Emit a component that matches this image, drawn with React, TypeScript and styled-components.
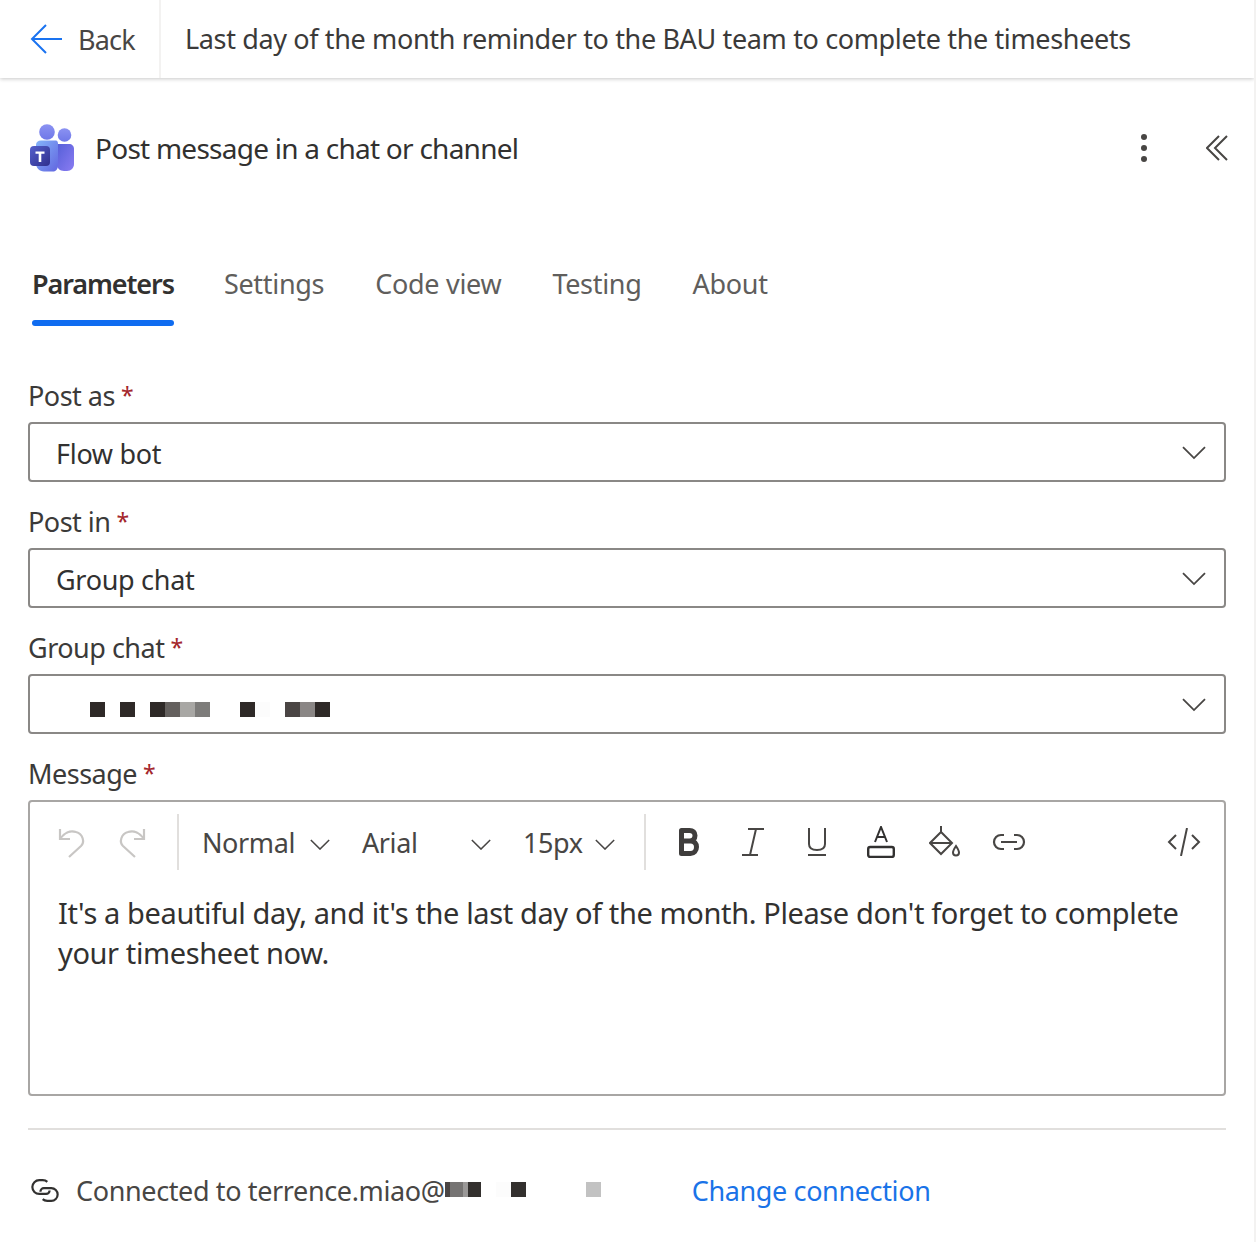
import React from 'react';
import styled, { createGlobalStyle } from 'styled-components';

const GlobalStyle = createGlobalStyle`
  html, body {
    margin: 0;
    padding: 0;
    background: #fff;
  }
  body {
    font-family: "Noto Sans", "Open Sans", sans-serif;
    color: #323130;
  }
`;

const Page = styled.div`
  width: 1256px;
  height: 1242px;
  overflow: hidden;
  box-sizing: border-box;
  border-right: 2px solid #f3f2f1;
`;

const Header = styled.header`
  display: flex;
  height: 78px;
  box-shadow: 0 1px 4px rgba(0, 0, 0, 0.22);
`;

const BackCell = styled.div`
  display: flex;
  align-items: center;
  gap: 16px;
  width: 161px;
  box-sizing: border-box;
  padding-left: 30px;
  border-right: 2px solid #f3f2f1;
  font-size: 27px;
  letter-spacing: -0.8px;
  color: #484644;
`;

const FlowTitle = styled.div`
  display: flex;
  align-items: center;
  padding: 0 0 2px 24px;
  font-size: 27px;
  letter-spacing: -0.36px;
  white-space: nowrap;
  color: #3b3a39;
`;

const Panel = styled.main`
  padding: 0 28px;
`;

const ActionRow = styled.div`
  display: flex;
  align-items: center;
  height: 48px;
  margin-top: 46px;
  padding-left: 2px;
`;

const ActionTitle = styled.h1`
  flex: 1;
  margin: 0 0 0 19px;
  font-size: 28px;
  font-weight: 400;
  letter-spacing: -0.75px;
`;

const ActionIcons = styled.div`
  display: flex;
  align-items: center;
  gap: 59px;
  margin-right: -2px;
`;

const Tabs = styled.nav`
  display: flex;
  gap: 51px;
  margin-top: 92px;
  padding-left: 4px;
`;

const Tab = styled.div<{ $active?: boolean }>`
  position: relative;
  height: 56px;
  line-height: 40px;
  font-size: 27px;
  margin-right: ${({ $active }) => ($active ? '-1px' : '0')};
  letter-spacing: ${({ $active }) => ($active ? '-1.1px' : '-0.3px')};
  font-weight: ${({ $active }) => ($active ? 600 : 400)};
  color: ${({ $active }) => ($active ? '#323130' : '#605e5c')};
  ${({ $active }) =>
    $active
      ? `&::after {
          content: '';
          position: absolute;
          left: 0;
          right: 0;
          bottom: -6px;
          height: 6px;
          border-radius: 3px;
          background: #0f6cf0;
        }`
      : ''}
`;

const Form = styled.div`
  display: flex;
  flex-direction: column;
  margin-top: 58px;
`;

const Label = styled.label`
  display: block;
  height: 44px;
  line-height: 34px;
  font-size: 27px;
  letter-spacing: -0.5px;
  color: #3b3a39;
`;

const Required = styled.span`
  margin-left: 6px;
  font-size: 23px;
  vertical-align: 2px;
  color: #a4262c;
`;

const Select = styled.div`
  display: flex;
  align-items: center;
  justify-content: space-between;
  height: 60px;
  box-sizing: border-box;
  margin-bottom: 22px;
  padding: 2px 18px 0 26px;
  border: 2px solid #8a8886;
  border-radius: 4px;
  font-size: 27px;
  letter-spacing: -0.3px;
`;

const Redacted = styled.div<{ $offset?: number; $lift?: number }>`
  display: flex;
  margin-left: ${({ $offset }) => $offset || 0}px;
  margin-top: ${({ $lift }) => ($lift && $lift > 0 ? $lift : 0)}px;
  margin-bottom: ${({ $lift }) => ($lift && $lift < 0 ? -$lift : 0)}px;
`;

const Pixel = styled.span<{ $size: number; $height: number; $color: string }>`
  display: block;
  width: ${({ $size }) => $size}px;
  height: ${({ $height }) => $height}px;
  background: ${({ $color }) => $color};
`;

const Editor = styled.div`
  height: 296px;
  box-sizing: border-box;
  border: 2px solid #a8a6a4;
  border-radius: 4px;
`;

const Toolbar = styled.div`
  display: flex;
  align-items: center;
  height: 56px;
  margin-top: 12px;
  padding-left: 28px;
  font-size: 27px;
  letter-spacing: -0.4px;
`;

const ToolButton = styled.span<{ $width: number; $after?: number }>`
  display: flex;
  align-items: center;
  justify-content: center;
  width: ${({ $width }) => $width}px;
  height: 56px;
  flex: none;
  margin-right: ${({ $after }) => $after || 0}px;
`;

const ToolSep = styled.span<{ $left: number; $right: number }>`
  flex: none;
  width: 2px;
  height: 56px;
  margin-left: ${({ $left }) => $left}px;
  margin-right: ${({ $right }) => $right}px;
  background: #e1dfdd;
`;

const ToolSelect = styled.span<{ $width: number; $before?: number }>`
  display: flex;
  align-items: center;
  justify-content: space-between;
  width: ${({ $width }) => $width}px;
  flex: none;
  margin-left: ${({ $before }) => $before || 0}px;
  color: #484644;

  svg {
    margin-top: 5px;
  }
`;

const Spacer = styled.span`
  flex: 1;
`;

const EditorBody = styled.div`
  padding: 23px 28px 0;
  font-size: 29px;
  line-height: 40px;
  letter-spacing: -0.38px;
  color: #323130;
`;

const Divider = styled.hr`
  margin: 32px 0 0;
  border: 0;
  height: 2px;
  background: #e1dfdd;
`;

const Connection = styled.div`
  display: flex;
  align-items: center;
  height: 60px;
  margin-top: 30px;
  padding-left: 3px;
  font-size: 27px;
  letter-spacing: -0.37px;
`;

const ConnectionText = styled.span`
  margin-left: 17px;
  color: #484644;
  white-space: nowrap;
`;

const ChangeLink = styled.a`
  margin-left: 91px;
  color: #1a73e8;
  white-space: nowrap;
`;

const Chevron = ({ size = 24 }: { size?: number }) => (
  <svg width={size} height={size * 0.55} viewBox="0 0 24 13" fill="none" stroke="#484644" strokeWidth="1.800">
    <path d="M1 1l11 11L23 1" />
  </svg>
);

const TeamsLogo = () => (
  <svg width="46" height="48" viewBox="0 0 46 48">
    <defs>
      <linearGradient id="th" x1="0" y1="0" x2="0" y2="1">
        <stop offset="0" stopColor="#8b92f2" />
        <stop offset="1" stopColor="#6f78e8" />
      </linearGradient>
      <linearGradient id="tb" x1="0" y1="0" x2="1" y2="1">
        <stop offset="0" stopColor="#84b4fa" />
        <stop offset="1" stopColor="#6266e0" />
      </linearGradient>
      <linearGradient id="tr" x1="0" y1="0" x2="1" y2="1">
        <stop offset="0" stopColor="#555fd8" />
        <stop offset="1" stopColor="#8a7cf2" />
      </linearGradient>
      <linearGradient id="ts" x1="0" y1="0" x2="1" y2="1">
        <stop offset="0" stopColor="#5560cc" />
        <stop offset="1" stopColor="#2f2f8c" />
      </linearGradient>
    </defs>
    <circle cx="17" cy="8" r="7.8" fill="url(#th)" />
    <circle cx="34.5" cy="11" r="6.8" fill="url(#th)" />
    <path d="M27 20h12c3 0 5 2 5 5v15c0 4-3 7-7 7h-3c-4 0-7-3-7-6z" fill="url(#tr)" />
    <path d="M6 21c0-3 2-4.500 5-4.500h14c3 0 3 2 3 4.500v20c0 4-2 6.500-5 6.500H14c-5 0-8-4-8-8z" fill="url(#tb)" />
    <rect x="0" y="22" width="20" height="20" rx="4" fill="url(#ts)" />
    <path d="M5.500 27.500h9v2.200h-3.200V38H8.700v-8.300H5.500z" fill="#fff" />
  </svg>
);

const pixels1 = [
  { w: 15, c: '#2e2927' },
  { w: 15, c: '#fff' },
  { w: 15, c: '#2e2927' },
  { w: 15, c: '#fff' },
  { w: 15, c: '#2e2927' },
  { w: 15, c: '#64605e' },
  { w: 15, c: '#a8a7a4' },
  { w: 15, c: '#7d7c7a' },
  { w: 30, c: '#fff' },
  { w: 15, c: '#2e2927' },
  { w: 15, c: '#fcfcfc' },
  { w: 15, c: '#fff' },
  { w: 15, c: '#4a4544' },
  { w: 15, c: '#8a8685' },
  { w: 15, c: '#2e2927' },
];

const pixels2 = [
  { w: 5, c: '#4a4544' },
  { w: 13, c: '#767473' },
  { w: 5, c: '#9a9897' },
  { w: 13, c: '#33302e' },
  { w: 15, c: '#fff' },
  { w: 15, c: '#fcfcfc' },
  { w: 15, c: '#33302e' },
  { w: 60, c: '#fff' },
  { w: 15, c: '#c2c2c2' },
];

export default function App() {
  return (
    <Page>
      <GlobalStyle />
      <Header>
        <BackCell>
          <svg width="32" height="30" viewBox="0 0 32 30" fill="none" stroke="#1a73f0" strokeWidth="2">
            <path d="M16 1L2 15l14 14M2 15h30" />
          </svg>
          Back
        </BackCell>
        <FlowTitle>Last day of the month reminder to the BAU team to complete the timesheets</FlowTitle>
      </Header>
      <Panel>
        <ActionRow>
          <TeamsLogo />
          <ActionTitle>Post message in a chat or channel</ActionTitle>
          <ActionIcons>
            <svg width="6" height="28" viewBox="0 0 6 28" fill="#484644">
              <circle cx="3" cy="3" r="3" />
              <circle cx="3" cy="14" r="3" />
              <circle cx="3" cy="25" r="3" />
            </svg>
            <svg width="22" height="26" viewBox="0 0 22 26" fill="none" stroke="#484644" strokeWidth="2">
              <path d="M13 1L1 13l12 12M21 1L9 13l12 12" />
            </svg>
          </ActionIcons>
        </ActionRow>
        <Tabs>
          <Tab $active>Parameters</Tab>
          <Tab>Settings</Tab>
          <Tab>Code view</Tab>
          <Tab>Testing</Tab>
          <Tab>About</Tab>
        </Tabs>
        <Form>
          <Label>Post as<Required>*</Required></Label>
          <Select>
            Flow bot
            <Chevron />
          </Select>
          <Label>Post in<Required>*</Required></Label>
          <Select>
            Group chat
            <Chevron />
          </Select>
          <Label>Group chat<Required>*</Required></Label>
          <Select>
            <Redacted $offset={34} $lift={8}>
              {pixels1.map((p, i) => (
                <Pixel key={i} $size={p.w} $height={15} $color={p.c} />
              ))}
            </Redacted>
            <Chevron />
          </Select>
          <Label>Message<Required>*</Required></Label>
          <Editor>
            <Toolbar>
              <ToolButton $width={30} $after={28}>
                <svg width="30" height="34" viewBox="0 0 30 32" fill="none" stroke="#c8c6c4" strokeWidth="2.200">
                  <path d="M2 3v10h10M2 13C6 7 12 4 18 6c7 2 9 10 5 14L11 31" />
                </svg>
              </ToolButton>
              <ToolButton $width={30}>
                <svg width="30" height="34" viewBox="0 0 30 32" fill="none" stroke="#c8c6c4" strokeWidth="2.200">
                  <path d="M28 3v10H18M28 13C24 7 18 4 12 6 5 8 3 16 7 20l12 11" />
                </svg>
              </ToolButton>
              <ToolSep $left={31} $right={23} />
              <ToolSelect $width={128}>
                Normal
                <Chevron size={20} />
              </ToolSelect>
              <ToolSelect $width={129} $before={32}>
                Arial
                <Chevron size={20} />
              </ToolSelect>
              <ToolSelect $width={92} $before={32}>
                15px
                <Chevron size={20} />
              </ToolSelect>
              <ToolSep $left={29} $right={13} />
              <ToolButton $width={60}>
                <svg width="20" height="28" viewBox="0 0 20 28" fill="none" stroke="#3f3d3c" strokeWidth="5">
                  <path d="M2.500 2.500h8c3.500 0 5.500 2 5.500 5s-2 5.500-5.500 5.500h-8zM2.500 13h9c4 0 6 2.500 6 6s-2.500 6.500-6 6.500h-9z" strokeLinejoin="round" />
                </svg>
              </ToolButton>
              <ToolButton $width={68}>
                <svg width="24" height="28" viewBox="0 0 24 28" fill="none" stroke="#484644" strokeWidth="2">
                  <path d="M7 1h16M1 27h16M15 1L9 27" />
                </svg>
              </ToolButton>
              <ToolButton $width={60}>
                <svg width="20" height="28" viewBox="0 0 20 28" fill="none" stroke="#484644" strokeWidth="2">
                  <path d="M2 0v16c0 4 3 6 8 6s8-2 8-6V0M1 27h18" />
                </svg>
              </ToolButton>
              <ToolButton $width={68}>
                <svg width="28" height="32" viewBox="0 0 28 32" fill="none" stroke="#323130" strokeWidth="2">
                  <path d="M8 16l6-15 6 15M10 11h8" />
                  <rect x="1.200" y="21" width="25.600" height="10" rx="2" strokeWidth="2.400" />
                </svg>
              </ToolButton>
              <ToolButton $width={60}>
                <svg width="32" height="32" viewBox="0 0 32 32" fill="none" stroke="#484644" strokeWidth="2">
                  <path d="M12 0v6M12 6L1 17l11 11 11-11zM1 17h22" />
                  <path d="M27 20c-2 3-3 4.500-3 6.500a3 3 0 0 0 6 0c0-2-1-3.500-3-6.500z" />
                </svg>
              </ToolButton>
              <ToolButton $width={68}>
                <svg width="34" height="18" viewBox="0 0 34 18" fill="none" stroke="#484644" strokeWidth="2.200">
                  <path d="M12 2H9a7 7 0 0 0 0 14h3M22 2h3a7 7 0 0 1 0 14h-3M9 9h16" />
                </svg>
              </ToolButton>
              <Spacer />
              <ToolButton $width={34} $after={23}>
                <svg width="34" height="28" viewBox="0 0 34 28" fill="none" stroke="#484644" strokeWidth="2">
                  <path d="M9 7l-7 7 7 7M25 7l7 7-7 7M20 0l-6 28" />
                </svg>
              </ToolButton>
            </Toolbar>
            <EditorBody>
              It's a beautiful day, and it's the last day of the month. Please don't forget to complete your timesheet now.
            </EditorBody>
          </Editor>
          <Divider />
        </Form>
        <Connection>
          <svg width="28" height="23" viewBox="0 0 24 20" fill="none" stroke="#323130" strokeWidth="1.900">
            <path d="M14 2.500C13 1.500 12 1 10 1H7a6 6 0 0 0 0 12h6a3 3 0 0 0 3-3" />
            <path d="M10 17.500c1 1 2 1.500 4 1.500h3.500a5.500 5.500 0 0 0 0-11H11a3 3 0 0 0-3 3" />
          </svg>
          <ConnectionText>Connected to terrence.miao@</ConnectionText>
          <Redacted $lift={-2}>
            {pixels2.map((p, i) => (
              <Pixel key={i} $size={p.w} $height={15} $color={p.c} />
            ))}
          </Redacted>
          <ChangeLink>Change connection</ChangeLink>
        </Connection>
      </Panel>
    </Page>
  );
}
